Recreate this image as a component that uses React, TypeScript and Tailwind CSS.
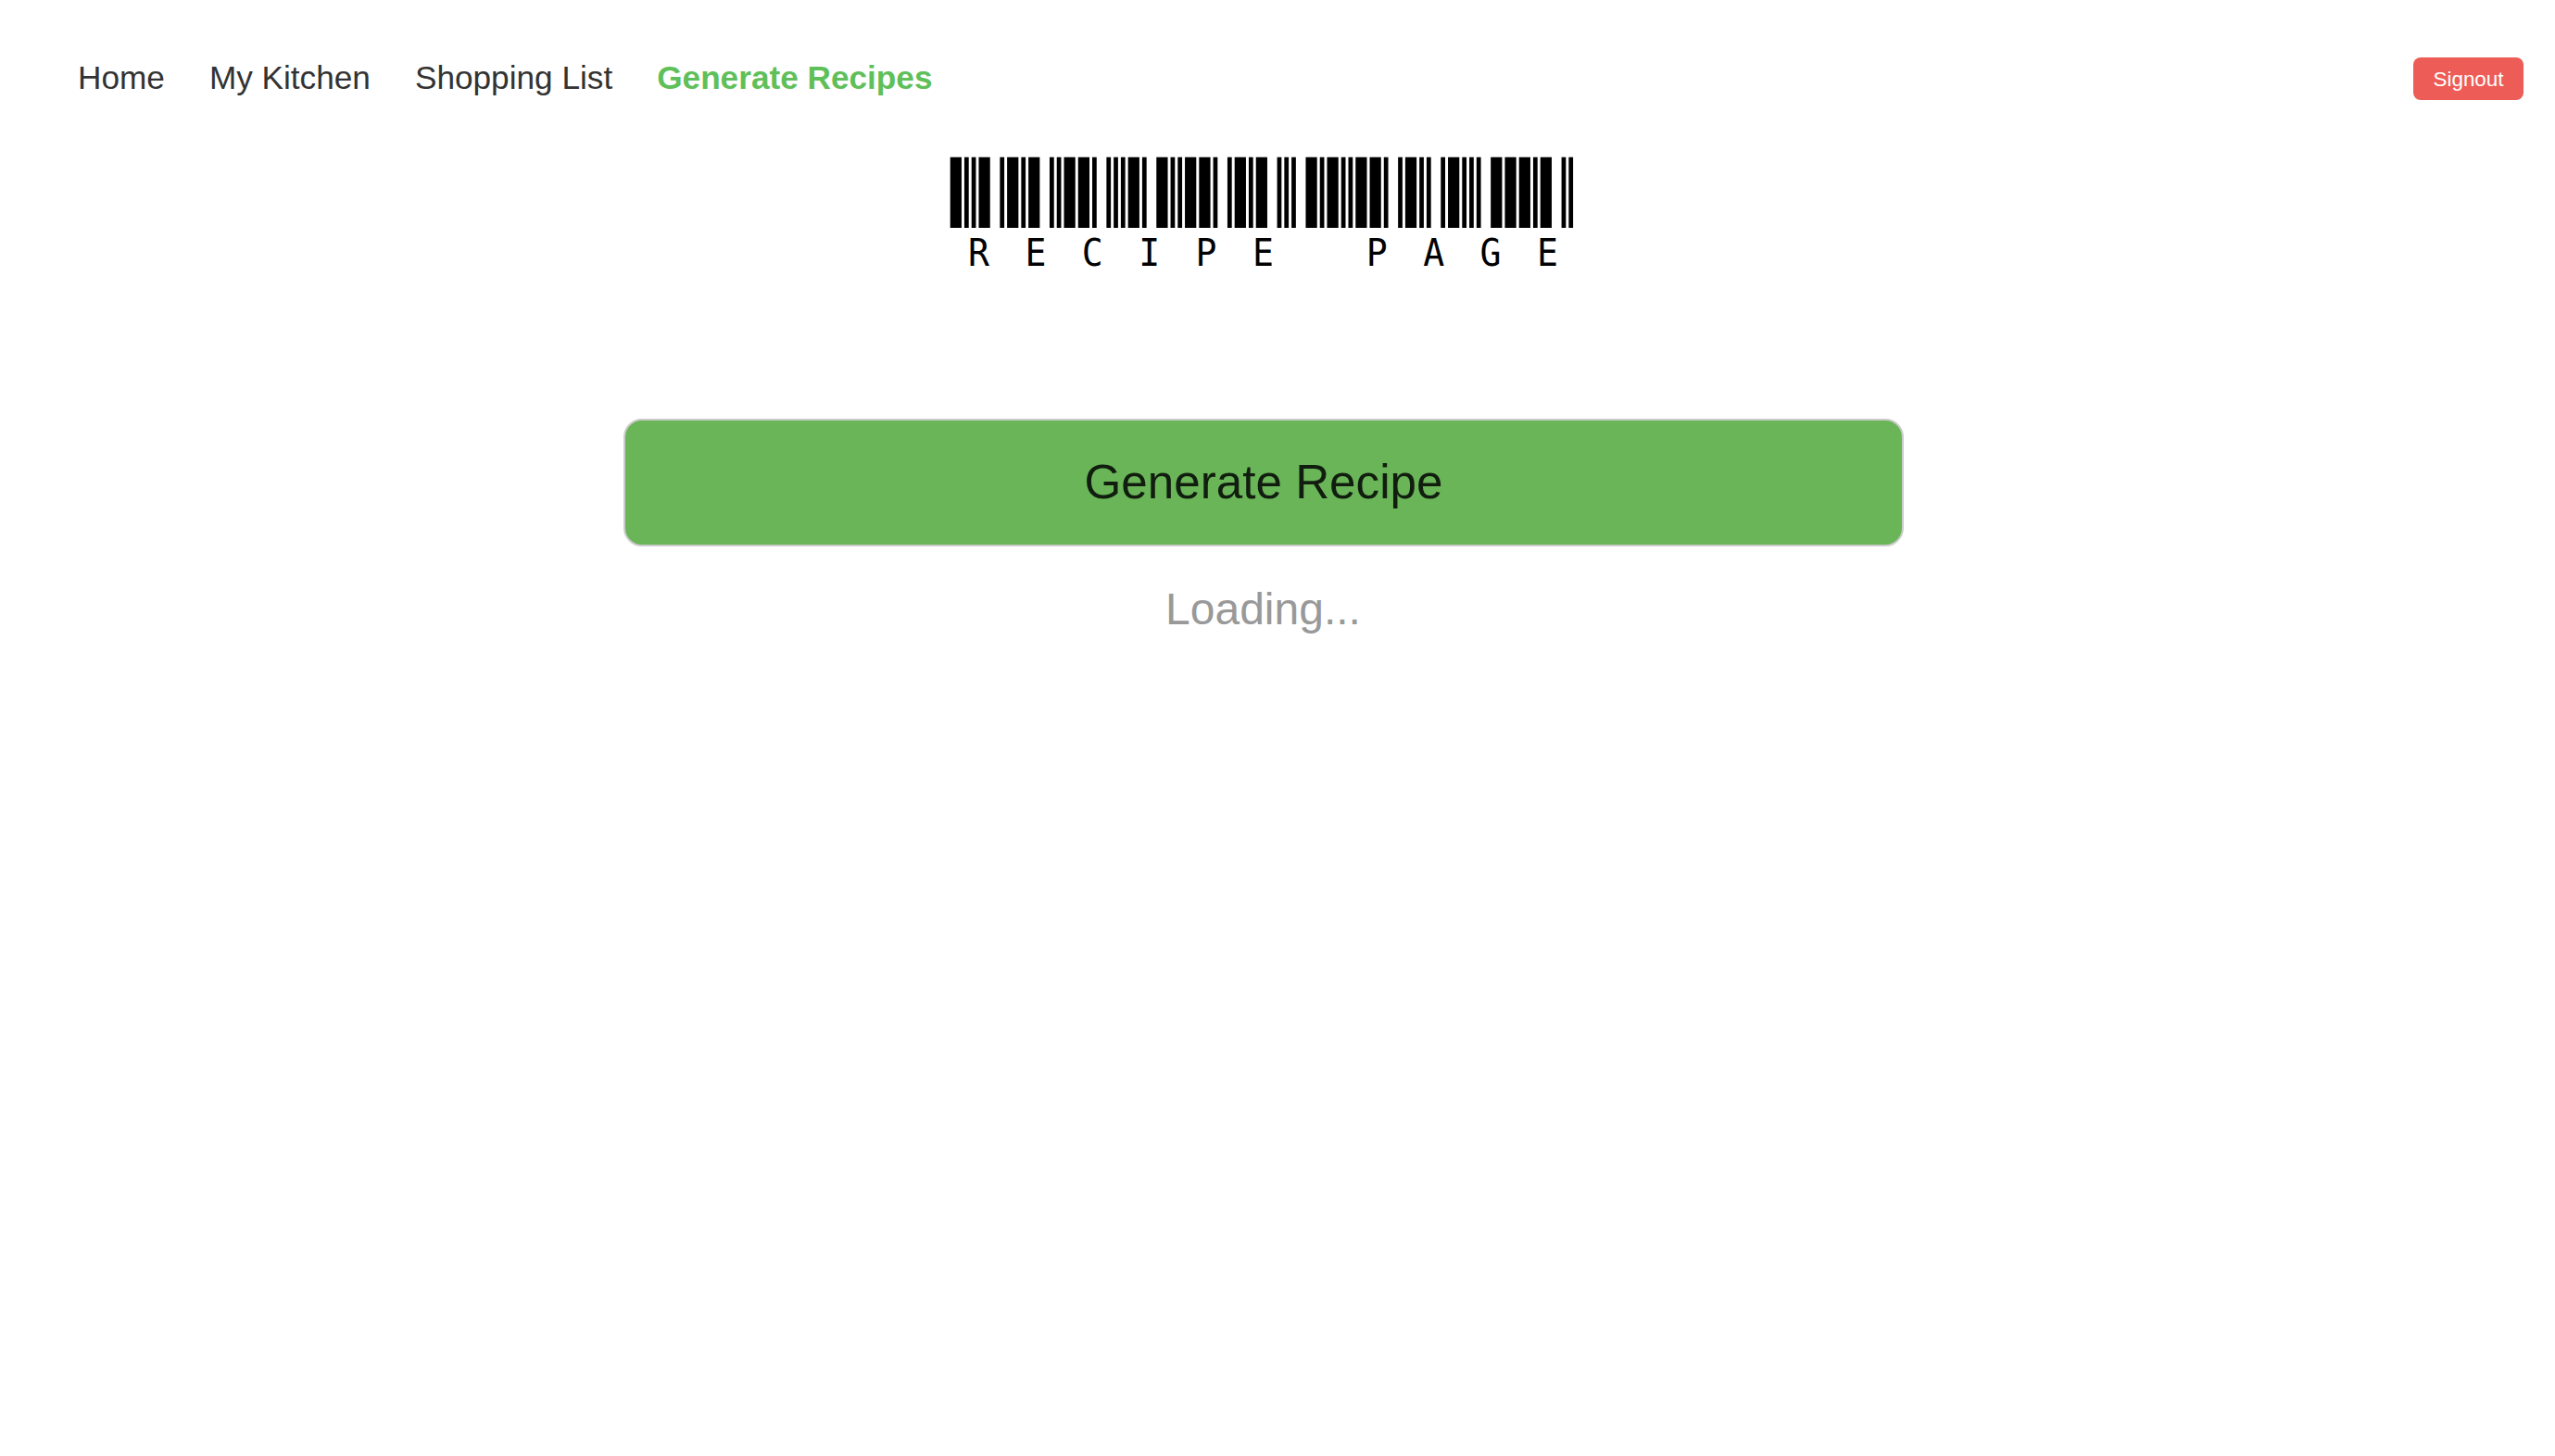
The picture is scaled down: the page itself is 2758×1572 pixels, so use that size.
const TITLE = "RECIPE PAGE";

// Code 39 symbols: W = wide bar, n = narrow bar, _ = extra-wide space.
const CODE39: Record<string, string> = {
  R: "WnnW_n",
  E: "WnW_nn",
  C: "WWn_nn",
  I: "nWn_Wn",
  P: "nWWn_n",
  A: "Wnn_nW",
  G: "nnn_WW",
  " ": "n_WnWn",
};

const NARROW = 4.75;
const WIDE = 12.25;
const GAP = 3.01;
const EXTRA = 7.6;

function buildBars(text: string) {
  const bars: { x: number; w: number }[] = [];
  let x = 0.7;
  for (const ch of text) {
    for (const s of CODE39[ch]) {
      if (s === "_") {
        x += EXTRA;
      } else {
        const w = s === "W" ? WIDE : NARROW;
        bars.push({ x, w });
        x += w + GAP;
      }
    }
  }
  return bars;
}

function Barcode() {
  return (
    <svg className="block h-[77px] w-[676px]" viewBox="0 0 676 77" aria-hidden="true">
      {buildBars(TITLE).map((b, i) => (
        <rect key={i} x={b.x} y={0.7} width={b.w} height={76.3} fill="#000" />
      ))}
    </svg>
  );
}

const LINKS = ["Home", "My Kitchen", "Shopping List"];

export default function App() {
  return (
    <div className="min-h-screen bg-white font-['Liberation_Sans',Arial,sans-serif]">
      <header className="flex h-[169px] items-start justify-between pl-[84px] pr-[34px]">
        <nav className="mt-[64px] flex gap-[48px] text-[35.2px] leading-[40px] text-[#333]">
          {LINKS.map((l) => (
            <a key={l} className="whitespace-nowrap">{l}</a>
          ))}
          <a className="font-bold whitespace-nowrap text-[#5fc05a]">Generate Recipes</a>
        </nav>
        <button className="mt-[62px] h-[46px] w-[119px] rounded-lg bg-[#ed5c56] text-[22.4px] leading-[47px] text-white">
          Signout
        </button>
      </header>
      <main>
        <div className="ml-[1025px] w-[760px]">
          <Barcode />
          <h1 className="ml-[20px] mt-[3px] h-[47px] origin-left scale-x-[0.93] whitespace-pre font-['DejaVu_Sans_Mono',monospace] text-[41px] leading-[48px] tracking-[41.34px] text-black">
            {TITLE}
          </h1>
        </div>
        <div className="ml-[673px] mt-[156px] flex w-[1382px] flex-col items-center">
          <button className="h-[138px] w-full rounded-[20px] border-2 border-[#ccc] bg-[#6ab558] text-[51.2px] leading-none text-[#111e0f]">
            Generate Recipe
          </button>
          <p className="mr-px mt-[40px] text-[48px] leading-[56px] text-[#999]">Loading...</p>
        </div>
      </main>
    </div>
  );
}
